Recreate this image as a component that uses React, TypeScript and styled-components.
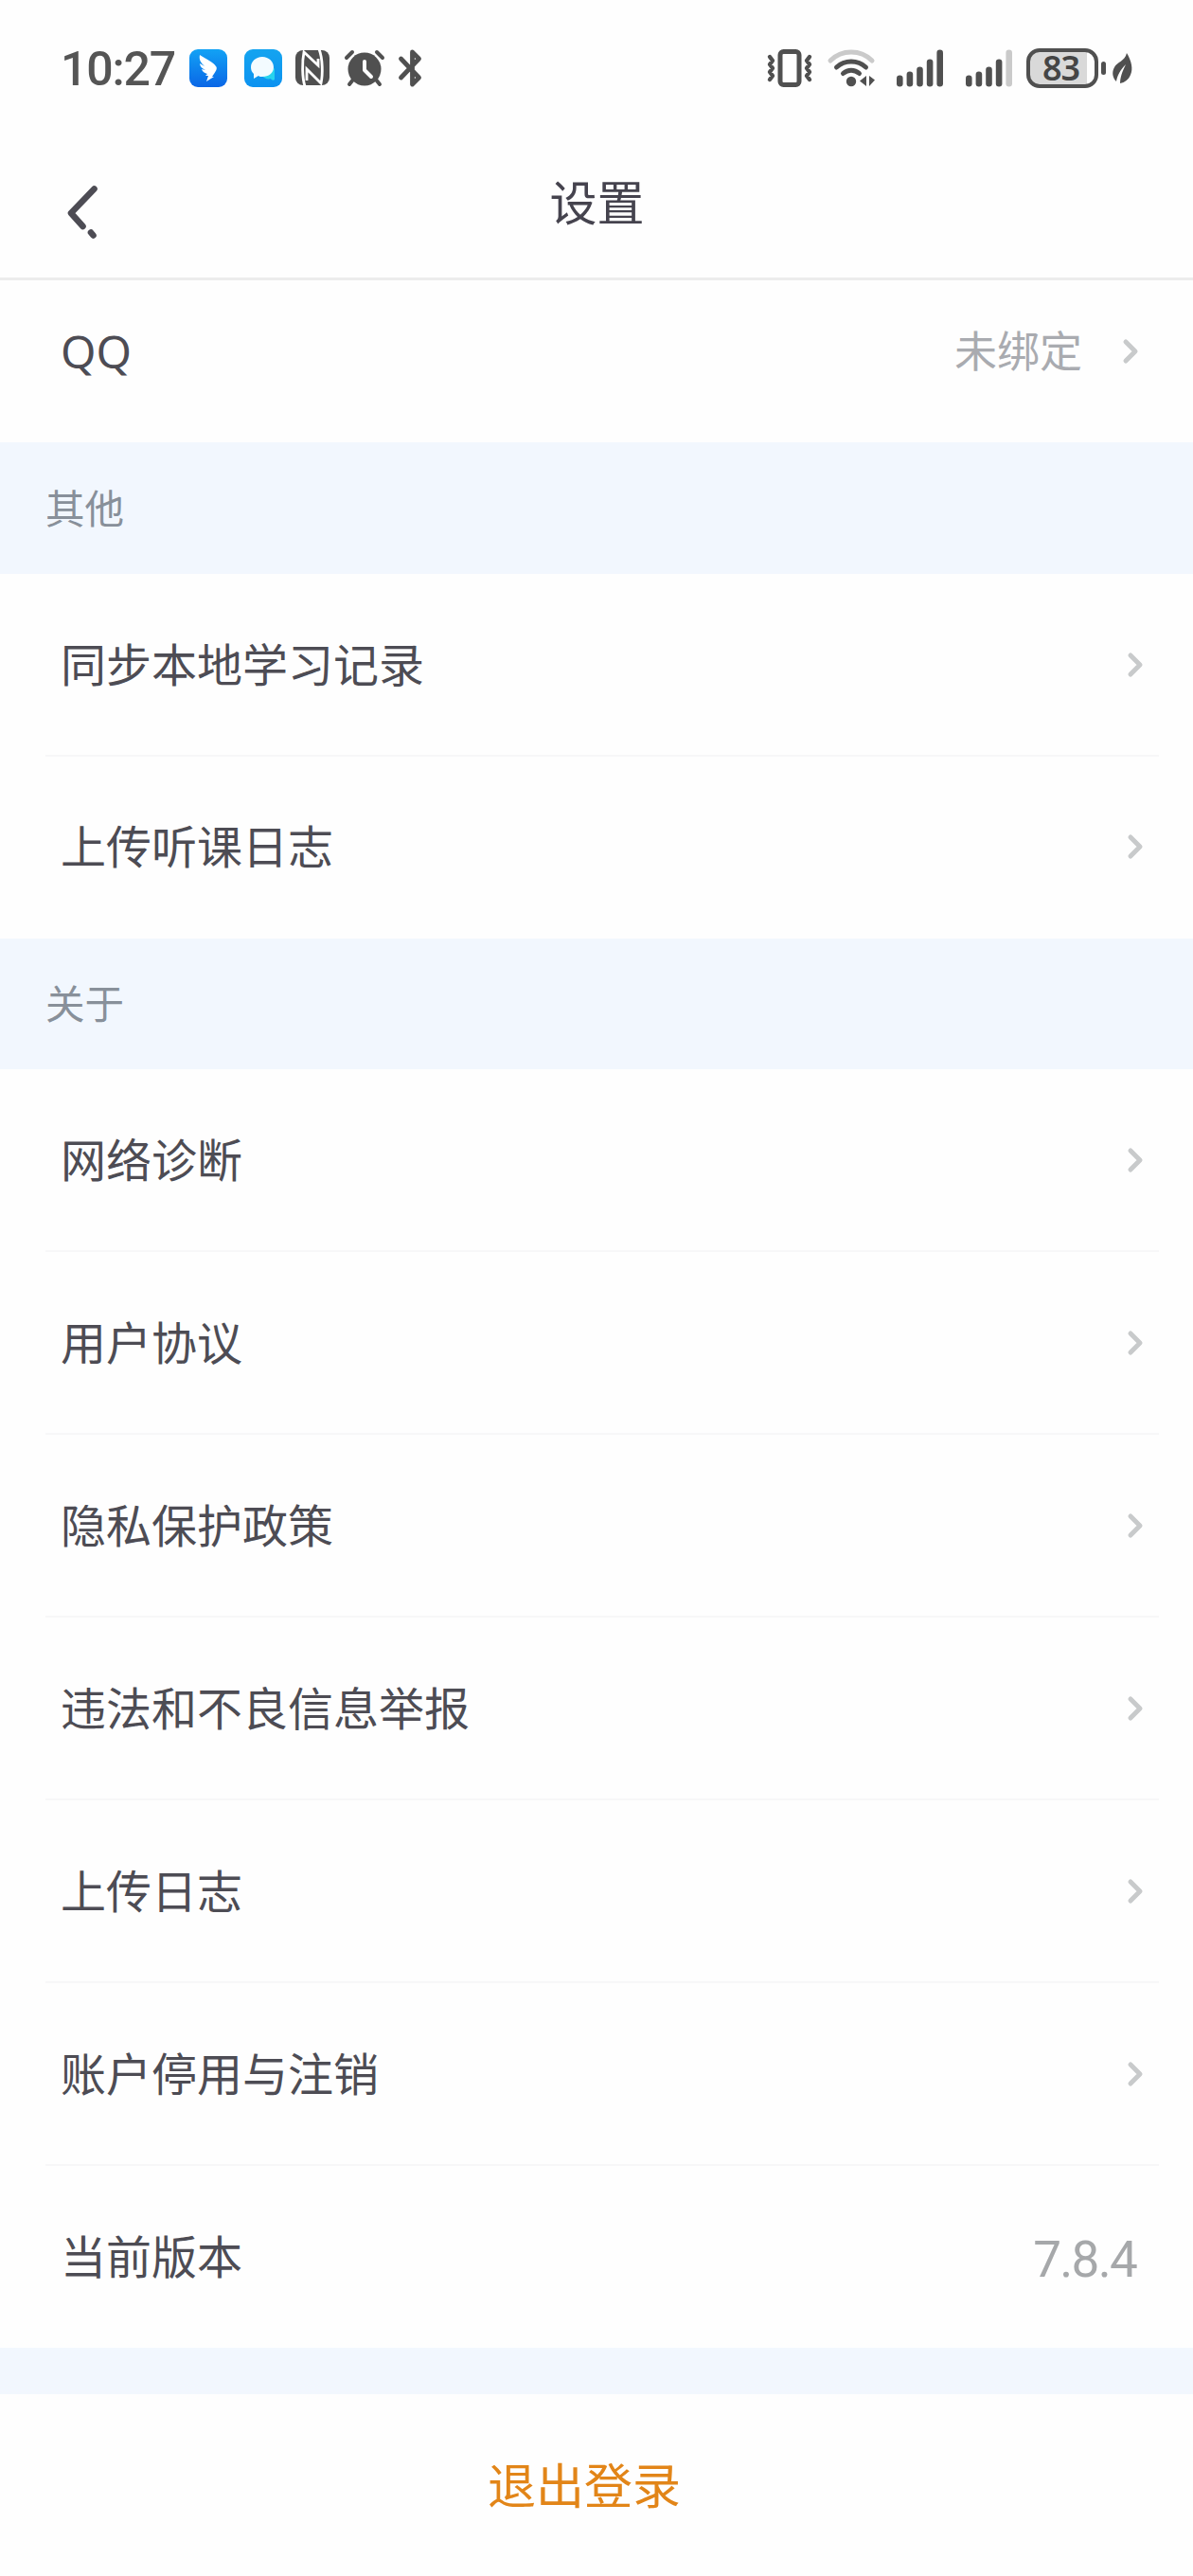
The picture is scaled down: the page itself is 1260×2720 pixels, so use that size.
import React from "react";
import styled, { createGlobalStyle } from "styled-components";

const INK = "#4d4c54";

const Global = createGlobalStyle`
  html, body { margin: 0; padding: 0; background: #fefefe; }
  * { box-sizing: border-box; }
`;

const Screen = styled.main`
  width: 1260px;
  height: 2720px;
  display: flex;
  flex-direction: column;
  overflow: hidden;
  background: #fefefe;
  color: ${INK};
  font-family: "Noto Sans", "Noto Sans CJK SC", sans-serif;
`;

const StatusBar = styled.header`
  height: 146px;
  flex: none;
  display: flex;
  justify-content: space-between;
  padding: 0 64px 0 64px;
`;

const StatusGroup = styled.div`
  display: flex;
  align-items: center;
  height: 144px;
`;

const Clock = styled.time`
  width: 134px;
  font: 500 50px/60px Roboto, sans-serif;
  letter-spacing: -1.2px;
  padding-top: 2px;
  color: #555;
  white-space: nowrap;
`;

const Glyph = styled.svg<{ $gap?: number }>`
  display: block;
  flex: none;
  overflow: visible;
  margin-left: ${(p) => p.$gap ?? 0}px;
`;

const Battery = styled.div`
  display: flex;
  align-items: center;
  justify-content: center;
  width: 76px;
  height: 42px;
  margin-left: 15px;
  padding-right: 3px;
  border: 4px solid #505050;
  border-radius: 14px;
  background: linear-gradient(90deg, #d9d9d9 60px, #fefefe 60px);
  font: 600 36px/34px "Noto Sans", sans-serif;
  letter-spacing: -1px;
  color: #454545;
`;

const NavBar = styled.nav`
  height: 150px;
  flex: none;
  display: grid;
  grid-template-columns: 130px 1fr 130px;
  border-bottom: 3px solid #ececec;
`;

const BackButton = styled.button`
  border: 0;
  padding: 48px 0 0 70px;
  background: none;
  display: flex;
`;

const Title = styled.h1`
  margin: 31px 0 0 1px;
  text-align: center;
  font-weight: 400;
  font-size: 50px;
  line-height: 74px;
  color: #45434e;
`;

const Row = styled.div<{ $height?: number; $line?: boolean; $right?: number; $lift?: number }>`
  height: ${(p) => p.$height ?? 193}px;
  flex: none;
  display: flex;
  align-items: center;
  justify-content: space-between;
  padding: 0 ${(p) => p.$right ?? 53}px ${(p) => p.$lift ?? 2}px 64px;
  background: linear-gradient(#f7f7f8, #f7f7f8) 48px 100% / ${(p) => (p.$line ? "1176px 2px" : "0 0")} no-repeat;
`;

const Label = styled.span`
  font-size: 48px;
  line-height: 70px;
`;

const Trailing = styled.div`
  display: flex;
  align-items: center;
`;

const Status = styled.span`
  font-size: 45px;
  line-height: 66px;
  color: #a9abb0;
  margin-right: 43px;
`;

const Version = styled.span`
  font: 400 53px/70px Roboto, sans-serif;
  letter-spacing: -1.7px;
  padding-top: 7px;
  color: #a6a8aa;
`;

const SectionHead = styled.h2<{ $height: number }>`
  height: ${(p) => p.$height}px;
  flex: none;
  margin: 0;
  padding: 0 48px;
  display: flex;
  align-items: center;
  background: #f2f7fe;
  color: #88909a;
  font-weight: 400;
  font-size: 41.5px;
  line-height: 60px;
`;

const Spacer = styled.div`
  height: 49px;
  flex: none;
  background: #f2f7fe;
`;

const Logout = styled.button`
  flex: 1;
  border: 0;
  padding: 0 26px 0 0;
  background: #fefefe;
  font-family: inherit;
  font-size: 51px;
  line-height: 74px;
  color: #e28518;
`;

const Chevron = () => (
  <Glyph width="16" height="28" viewBox="0 0 16 28" fill="none" stroke="#c8cacb" strokeWidth="5" strokeLinecap="round" strokeLinejoin="round">
    <path d="M3 4 13 14 3 24" />
  </Glyph>
);

const DingIcon = () => (
  <Glyph width="40" height="40" viewBox="0 0 40 40" $gap={2}>
    <defs>
      <linearGradient id="ding" x1="0" y1="0" x2="0" y2="1">
        <stop stopColor="#12a2f5" />
        <stop offset="1" stopColor="#0a66e6" />
      </linearGradient>
    </defs>
    <rect width="40" height="40" rx="9" fill="url(#ding)" />
    <path fill="#fff" d="M11 6C17 10 26 14 28 18C30 20 28 23 26 26L24 29H26L18 34L20 28H17L19 26C16 25 14 24 13 21L17 22C13 20 11 18 11 15L16 18C12 14 10 11 11 6Z" />
  </Glyph>
);

const ChatIcon = () => (
  <Glyph width="40" height="40" viewBox="0 0 40 40" $gap={18}>
    <defs>
      <linearGradient id="chat" x1="0" y1="0" x2="0" y2="1">
        <stop stopColor="#14a4f0" />
        <stop offset="1" stopColor="#0c92f0" />
      </linearGradient>
    </defs>
    <rect width="40" height="40" rx="9" fill="url(#chat)" />
    <path fill="#27d3ee" d="M32 20V32C31 33 29 33 28 31C25 32 21 31 19 28Z" />
    <path fill="#f3fbff" d="M19 8C26 8 31 13 31 19C31 25 26 29 19 29C17 29 16 29 15 28L10 31V26C8 24 7 22 7 19C7 13 12 8 19 8Z" />
  </Glyph>
);

const NfcIcon = () => (
  <Glyph width="36" height="38" viewBox="0 0 36 38" $gap={14}>
    <rect width="36" height="37" rx="8" fill="#505050" />
    <g fill="none" stroke="#fefefe" strokeWidth="2.8">
      <path d="M10 38C7 29 7 12 9 2L24 16V9" />
      <path d="M25 -1C29 9 29 26 27 35L12 20V32" />
    </g>
  </Glyph>
);

const AlarmIcon = () => (
  <Glyph width="42" height="38" viewBox="0 0 42 38" $gap={16}>
    <g stroke="#505050" strokeWidth="4" strokeLinecap="round">
      <path d="M2 8 8 2M34 2 40 8M9 31 5 36M33 31 37 36" />
    </g>
    <circle cx="21" cy="20" r="17.5" fill="#505050" />
    <path d="M21 12V21L28 28" fill="none" stroke="#fefefe" strokeWidth="4" strokeLinecap="round" strokeLinejoin="round" />
  </Glyph>
);

const BluetoothIcon = () => (
  <Glyph width="24" height="40" viewBox="0 0 24 40" $gap={15} fill="none" stroke="#505050" strokeWidth="4.8" strokeLinecap="round" strokeLinejoin="round">
    <path d="M2.5 10 21.5 30 14.5 37V3L21.5 10 2.5 30" />
  </Glyph>
);

const VibrateIcon = () => (
  <Glyph width="48" height="40" viewBox="0 0 48 40" fill="none" stroke="#505050" strokeLinecap="round" strokeLinejoin="round">
    <rect x="14" y="2.5" width="20" height="35" rx="3.5" strokeWidth="5" />
    <path strokeWidth="4.4" d="M3 8 6 12 3 16 6 20 3 24 6 28 3 32M45 8 42 12 45 16 42 20 45 24 42 28 45 32" />
  </Glyph>
);

const WifiIcon = () => (
  <Glyph width="50" height="40" viewBox="0 0 50 40" $gap={16} fill="none" strokeWidth="5" strokeLinecap="round">
    <path stroke="#cacaca" d="M3 12C15 0 35 0 47 12" />
    <path stroke="#505050" d="M9.5 19C18 11 32 11 40.5 19M16.5 25.5C21.5 21 28.5 21 33.5 25.5" />
    <circle cx="25" cy="34" r="5.2" fill="#505050" />
    <path fill="#505050" d="M41 28V39L34 33.5ZM44 28V39L50 32.5Z" />
  </Glyph>
);

const BARS = [12, 16, 21, 29, 39];

const SignalIcon = ({ level, gap }: { level: number; gap: number }) => (
  <Glyph width="49" height="40" viewBox="0 0 49 40" $gap={gap}>
    {BARS.map((h, i) => (
      <rect key={h} x={i * 10.6} y={39.5 - h} width="6.6" height={h} rx="3.3" fill={i < level ? "#505050" : "#cacaca"} />
    ))}
  </Glyph>
);

const BatteryTip = () => (
  <Glyph width="5" height="14" viewBox="0 0 5 14" $gap={3}>
    <rect width="5" height="14" rx="2.5" fill="#505050" />
  </Glyph>
);

const LeafIcon = () => (
  <Glyph width="21" height="33" viewBox="0 0 21 33" $gap={7}>
    <path fill="#505050" d="M15 0C20 8 22 17 19 23C17 28 13 31 8 32C8 26 10 20 14 12C8 18 5 24 4 30C0 26 -1 20 2 15C5 9 13 9 15 0Z" />
  </Glyph>
);

const ABOUT = ["网络诊断", "用户协议", "隐私保护政策", "违法和不良信息举报", "上传日志", "账户停用与注销"];

export default function App() {
  return (
    <Screen>
      <Global />
      <StatusBar>
        <StatusGroup>
          <Clock>10:27</Clock>
          <DingIcon />
          <ChatIcon />
          <NfcIcon />
          <AlarmIcon />
          <BluetoothIcon />
        </StatusGroup>
        <StatusGroup>
          <VibrateIcon />
          <WifiIcon />
          <SignalIcon level={5} gap={23} />
          <SignalIcon level={4} gap={24} />
          <Battery>83</Battery>
          <BatteryTip />
          <LeafIcon />
        </StatusGroup>
      </StatusBar>
      <NavBar>
        <BackButton aria-label="返回">
          <Glyph width="34" height="58" viewBox="0 0 34 58" fill="none" stroke={INK} strokeWidth="6.6" strokeLinecap="round" strokeLinejoin="round">
            <path d="M29.5 5.500 5 31 17.500 45M26 51.500 28.500 54.500" />
          </Glyph>
        </BackButton>
        <Title>设置</Title>
      </NavBar>
      <Row $height={171} $right={58} $lift={22}>
        <Label>QQ</Label>
        <Trailing>
          <Status>未绑定</Status>
          <Chevron />
        </Trailing>
      </Row>
      <SectionHead $height={139}>其他</SectionHead>
      <Row $line>
        <Label>同步本地学习记录</Label>
        <Chevron />
      </Row>
      <Row $height={192}>
        <Label>上传听课日志</Label>
        <Chevron />
      </Row>
      <SectionHead $height={138}>关于</SectionHead>
      {ABOUT.map((text) => (
        <Row key={text} $line>
          <Label>{text}</Label>
          <Chevron />
        </Row>
      ))}
      <Row $height={192} $right={60} $lift={1}>
        <Label>当前版本</Label>
        <Version>7.8.4</Version>
      </Row>
      <Spacer />
      <Logout>退出登录</Logout>
    </Screen>
  );
}
